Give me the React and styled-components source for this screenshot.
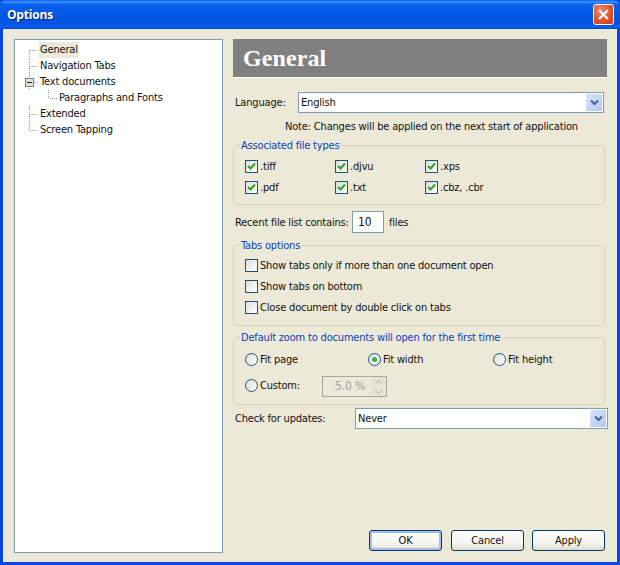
import React from "react";
import styled, { createGlobalStyle } from "styled-components";

const Global = createGlobalStyle`
  html, body { margin: 0; padding: 0; background: #0a4fe0; }
  * { box-sizing: border-box; }
`;

const Win = styled.div`
  width: 620px; height: 565px; display: flex; flex-direction: column;
  font: 11px/13px "DejaVu Sans Condensed", "DejaVu Sans", sans-serif; font-stretch: condensed; color: #111;
  letter-spacing: -0.18px;
  background: #0848e0; border-radius: 7px 7px 0 0; overflow: hidden;
`;
const TitleBar = styled.div`
  height: 29px; flex: none; display: flex; align-items: center; justify-content: space-between;
  padding: 0 6px 0 7px;
  background: linear-gradient(180deg, #0a5ae6 0%, #3a93ff 6%, #0a60ec 16%, #0058e6 50%, #0054e0 80%, #0a60f0 92%, #0048c8 100%);
`;
const Title = styled.span`
  font: bold 12px "Open Sans", sans-serif; color: #fff; text-shadow: 1px 1px 1px #0a2a80;
`;
const Close = styled.div`
  width: 21px; height: 21px; border: 1px solid #f2f2f2; border-radius: 3px;
  background: radial-gradient(circle at 35% 30%, #ee8f6c, #dd4f25 60%, #c23a14);
  display: flex; align-items: center; justify-content: center;
`;
const Client = styled.div`
  flex: 1; margin: 0 3px 3px; background: #ece9d8; display: flex; gap: 10px;
  padding: 10px 10px 9px 11px; min-height: 0;
`;
const Tree = styled.div`
  width: 209px; flex: none; background: #fff; border: 1px solid #7f9db9; padding-top: 2px;
`;
const Row = styled.div`
  height: 16px; display: flex; align-items: center; padding-left: ${p => p.$indent}px;
`;
const Branch = styled.svg`
  width: ${p => p.$w}px; height: 16px; flex: none; display: block;
`;
const RowText = styled.span`
  padding: 0 1px; height: 16px; line-height: 16px; white-space: nowrap;
  background: ${p => (p.$selected ? "#ece9d8" : "transparent")};
`;

const Main = styled.div`
  flex: 1; min-width: 0; display: flex; flex-direction: column;
`;
const Header = styled.div`
  height: 39px; flex: none; background: #808080; color: #fff; padding-left: 10px;
  border-bottom: 1px solid #fff; letter-spacing: .1px;
  font: bold 24px/38px "Liberation Serif", serif;
`;
const FieldRow = styled.div`
  display: flex; align-items: center; padding-left: 2px; margin-top: ${p => p.$top}px;
`;
const Label = styled.span`
  width: ${p => p.$w}px; flex: none; white-space: nowrap;
`;
const Combo = styled.div`
  height: 21px; width: ${p => p.$w}px; flex: none; background: #fff; border: 1px solid #7f9db9;
  display: flex; align-items: center; justify-content: space-between; padding: 0 1px 0 2px;
`;
const ComboButton = styled.div`
  width: 16px; height: 17px; border-radius: 1px;
  background: linear-gradient(135deg, #d8e4fd, #b3c8f5);
  display: flex; align-items: center; justify-content: center;
`;
const Note = styled.div`
  padding-left: 52px; margin-top: 7px; height: 13px; white-space: nowrap;
`;
const Group = styled.fieldset`
  margin: ${p => p.$top}px 2px 0 0; padding: 0; height: ${p => p.$h}px;
  border: 1px solid #d6d2c0; border-radius: 4px; min-width: 0;
`;
const Legend = styled.legend`
  color: #0a3fb8; margin-left: 6px; padding: 0 1px; line-height: 13px;
`;
const CheckGrid = styled.div`
  display: grid; grid-template-columns: repeat(3, 90px); row-gap: 8px; padding: 8px 0 0 11px;
`;
const CheckList = styled.div`
  display: flex; flex-direction: column; gap: 8px; padding: 7px 0 0 11px;
`;
const Check = styled.label`
  display: flex; align-items: center; gap: 2px; height: 13px; white-space: nowrap;
`;
const Box = styled.span`
  width: 13px; height: 13px; flex: none; border: 1px solid #1c5180;
  background: linear-gradient(135deg, #dcdcd7, #fff);
  display: flex; align-items: center; justify-content: center;
`;
const RadioGrid = styled.div`
  display: grid; grid-template-columns: 123px 125px 100px; padding: 9px 0 0 11px;
`;
const Radio = styled.span`
  width: 13px; height: 13px; flex: none; border-radius: 50%; border: 1px solid #1c5180;
  background: linear-gradient(135deg, #dcdcd7, #fff);
  display: flex; align-items: center; justify-content: center;
  &::after {
    content: ""; width: 5px; height: 5px; border-radius: 50%;
    background: ${p => (p.$on ? "#3fb03f" : "transparent")};
  }
`;
const CustomRow = styled.div`
  display: flex; align-items: center; padding-left: 11px; margin-top: 8px;
`;
const Spin = styled.div`
  margin: 2px 0 0 11px; width: 65px; height: 21px; border: 1px solid #aca899; background: #ece9d8;
  display: flex; align-items: center; justify-content: flex-end; color: #a5a295;
  font-size: 12px;
`;
const SpinButtons = styled.div`
  width: 16px; height: 19px; margin: 0 0 0 5px; display: flex; flex-direction: column; gap: 1px;
`;
const SpinButton = styled.div`
  flex: 1; background: #e6e3d4; border-radius: 1px;
  display: flex; align-items: center; justify-content: center;
`;
const NumInput = styled.div`
  width: 32px; height: 22px; margin-right: 5px; background: #fff; border: 1px solid #7f9db9;
  padding-left: 5px; line-height: 20px; font-size: 12px;
`;
const Footer = styled.div`
  margin-top: auto; display: flex; justify-content: flex-end; gap: 8px; padding: 0 2px 2px 0;
`;
const Btn = styled.div`
  width: 73px; height: 21px; border: 1px solid #003c74; border-radius: 3px;
  background: linear-gradient(180deg, #fff, #f4f3ec 70%, #dcd8cc);
  display: flex; align-items: center; justify-content: center;
  box-shadow: ${p => (p.$def ? "inset 0 0 0 2px #a5bfe8" : "none")};
  margin-right: ${p => (p.$def ? 1 : 0)}px;
`;

const Chevron = () => (
  <svg width="9" height="7" viewBox="0 0 9 7">
    <path d="M1 1.5 L4.5 5 L8 1.5" fill="none" stroke="#4d6185" strokeWidth="2" />
  </svg>
);
const Tick = () => (
  <svg width="11" height="11" viewBox="0 0 11 11">
    <path d="M2 5 L4.5 7.5 L9 2.5" fill="none" stroke="#2aa12a" strokeWidth="2" />
  </svg>
);
const Checked = ({ on, children }) => (
  <Check>
    <Box>{on && <Tick />}</Box>
    {children}
  </Check>
);
const RadioItem = ({ on, children }) => (
  <Check>
    <Radio $on={on} />
    {children}
  </Check>
);
const dots = "#9a9a9a";
const Lines = ({ up = true, down = true, box = false }) => (
  <Branch $w={24} viewBox="0 0 24 16">
    <path d={`M14.5 ${up ? 0 : 8} V${down ? 16 : 8.5} M14.5 8.5 H23`} stroke={dots} strokeDasharray="1 1" fill="none" />
    {box && (
      <>
        <rect x="10.5" y="4.5" width="8" height="8" fill="#e4e2d8" stroke="#808080" />
        <path d="M12 8.5 H17" stroke="#222" />
      </>
    )}
  </Branch>
);
const ChildLines = () => (
  <Branch $w={19} viewBox="0 0 19 16">
    <path d="M9.5 0 V8.5 H18" stroke={dots} strokeDasharray="1 1" fill="none" />
  </Branch>
);

export default function App() {
  return (
    <Win>
      <Global />
      <TitleBar>
        <Title>Options</Title>
        <Close>
          <svg width="13" height="13" viewBox="0 0 13 13">
            <path d="M2 2 L11 11 M11 2 L2 11" stroke="#fff" strokeWidth="2.2" />
          </svg>
        </Close>
      </TitleBar>
      <Client>
        <Tree>
          <Row><Lines up={false} /><RowText $selected>General</RowText></Row>
          <Row><Lines /><RowText>Navigation Tabs</RowText></Row>
          <Row><Lines box /><RowText>Text documents</RowText></Row>
          <Row $indent={24}><ChildLines /><RowText>Paragraphs and Fonts</RowText></Row>
          <Row><Lines /><RowText>Extended</RowText></Row>
          <Row><Lines down={false} /><RowText>Screen Tapping</RowText></Row>
        </Tree>
        <Main>
          <Header>General</Header>
          <FieldRow $top={14}>
            <Label $w={63}>Language:</Label>
            <Combo $w={306}>English<ComboButton><Chevron /></ComboButton></Combo>
          </FieldRow>
          <Note>Note: Changes will be applied on the next start of application</Note>
          <Group $top={6} $h={66}>
            <Legend>Associated file types</Legend>
            <CheckGrid>
              <Checked on>.tiff</Checked>
              <Checked on>.djvu</Checked>
              <Checked on>.xps</Checked>
              <Checked on>.pdf</Checked>
              <Checked on>.txt</Checked>
              <Checked on>.cbz, .cbr</Checked>
            </CheckGrid>
          </Group>
          <FieldRow $top={6}>
            <Label $w={117}>Recent file list contains:</Label>
            <NumInput>10</NumInput>
            <span>files</span>
          </FieldRow>
          <Group $top={6} $h={87}>
            <Legend>Tabs options</Legend>
            <CheckList>
              <Checked>Show tabs only if more than one document open</Checked>
              <Checked>Show tabs on bottom</Checked>
              <Checked>Close document by double click on tabs</Checked>
            </CheckList>
          </Group>
          <Group $top={5} $h={74}>
            <Legend>Default zoom to documents will open for the first time</Legend>
            <RadioGrid>
              <RadioItem>Fit page</RadioItem>
              <RadioItem on>Fit width</RadioItem>
              <RadioItem>Fit height</RadioItem>
            </RadioGrid>
            <CustomRow>
              <Label $w={66}><RadioItem>Custom:</RadioItem></Label>
              <Spin>
                5.0 %
                <SpinButtons>
                  <SpinButton>
                    <svg width="7" height="4" viewBox="0 0 7 4"><path d="M.5 3.5 L3.5 .5 L6.5 3.5" fill="none" stroke="#aca899" /></svg>
                  </SpinButton>
                  <SpinButton>
                    <svg width="7" height="4" viewBox="0 0 7 4"><path d="M.5 .5 L3.5 3.5 L6.5 .5" fill="none" stroke="#aca899" /></svg>
                  </SpinButton>
                </SpinButtons>
              </Spin>
            </CustomRow>
          </Group>
          <FieldRow $top={3}>
            <Label $w={120}>Check for updates:</Label>
            <Combo $w={253}>Never<ComboButton><Chevron /></ComboButton></Combo>
          </FieldRow>
          <Footer>
            <Btn $def>OK</Btn>
            <Btn>Cancel</Btn>
            <Btn>Apply</Btn>
          </Footer>
        </Main>
      </Client>
    </Win>
  );
}
